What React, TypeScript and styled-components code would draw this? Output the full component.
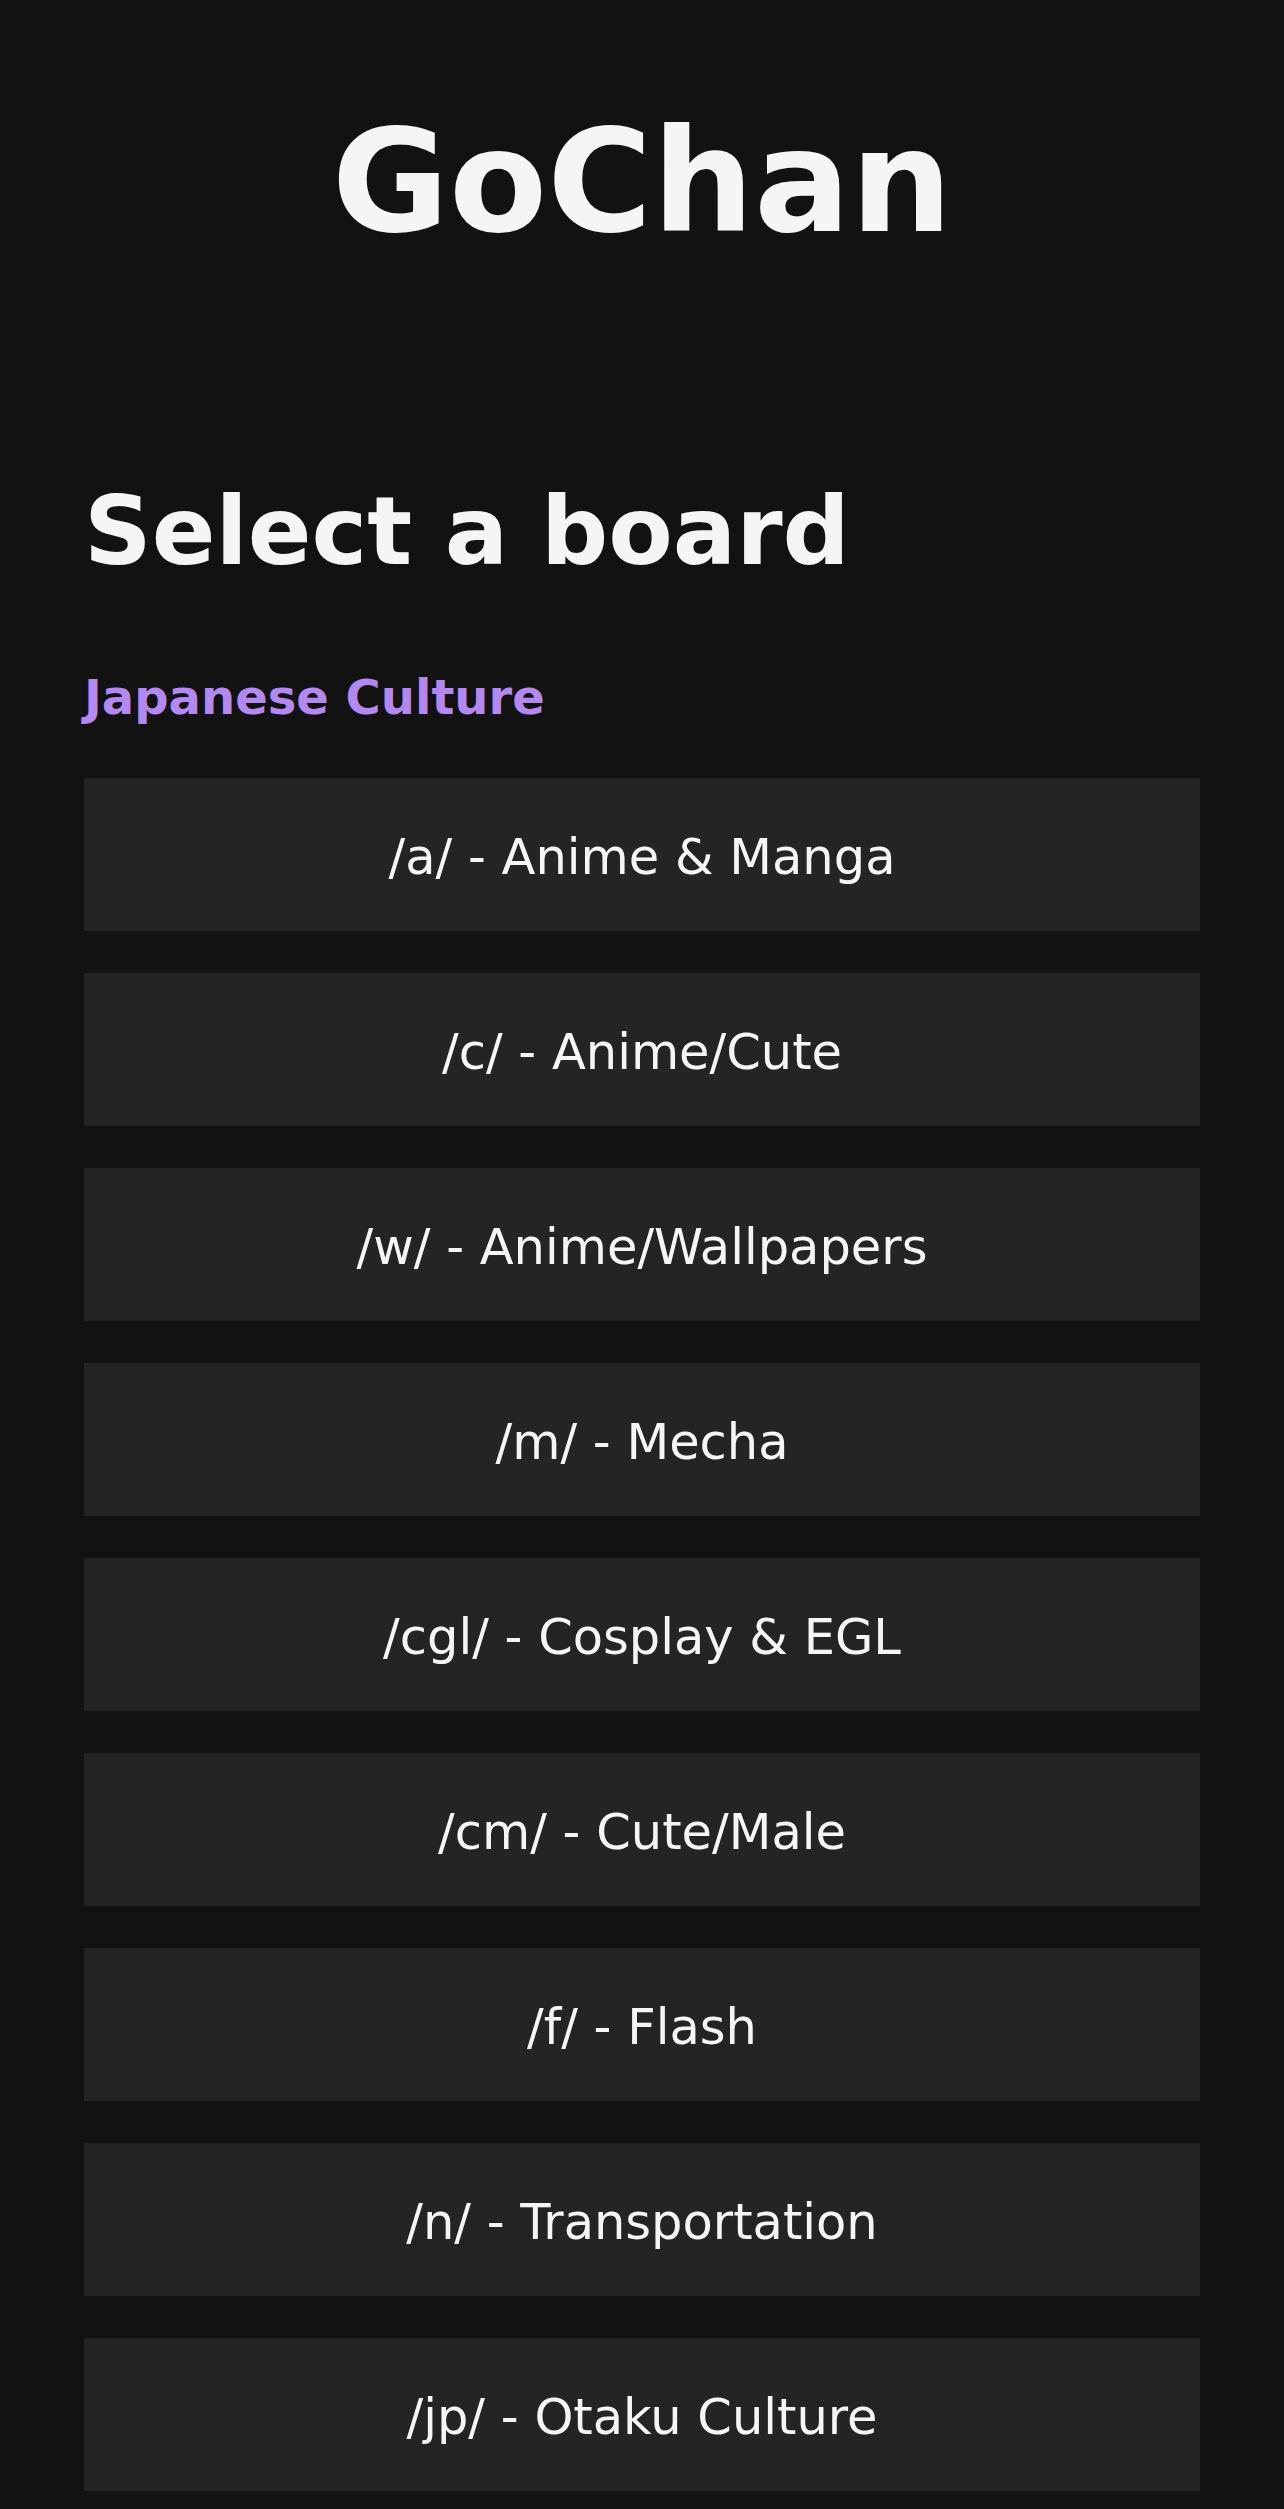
import styled, { createGlobalStyle } from "styled-components";

const GlobalStyle = createGlobalStyle`
  html, body {
    margin: 0;
    padding: 0;
    background-color: #121212;
  }
  body {
    font-family: "DejaVu Sans", Verdana, sans-serif;
    color: #f5f5f5;
  }
`;

interface Board {
  code: string;
  name: string;
}

const boards: Board[] = [
  { code: "a", name: "Anime & Manga" },
  { code: "c", name: "Anime/Cute" },
  { code: "w", name: "Anime/Wallpapers" },
  { code: "m", name: "Mecha" },
  { code: "cgl", name: "Cosplay & EGL" },
  { code: "cm", name: "Cute/Male" },
  { code: "f", name: "Flash" },
  { code: "n", name: "Transportation" },
  { code: "jp", name: "Otaku Culture" },
];

const App: React.FC = () => {
  return (
    <>
      <GlobalStyle />
      <Page>
        <Header>
          <Logo>GoChan</Logo>
        </Header>
        <Main>
          <Heading>Select a board</Heading>
          <Category>Japanese Culture</Category>
          <BoardList>
            {boards.map((b) => (
              <BoardLink key={b.code} href={`#/${b.code}/`}>
                /{b.code}/ - {b.name}
              </BoardLink>
            ))}
          </BoardList>
        </Main>
      </Page>
    </>
  );
};

export default App;

const Page = styled.div`
  min-height: 2509px;
  box-sizing: border-box;
  padding: 0 84px 19px;
  background-color: #121212;
`;

const Header = styled.header`
  padding-top: 98px;
  text-align: center;
`;

const Logo = styled.h1`
  margin: 0;
  font-size: 143px;
  font-weight: 700;
  line-height: normal;
  color: #f5f5f5;
`;

const Main = styled.main`
  display: flex;
  flex-direction: column;
`;

const Heading = styled.h2`
  margin: 212px 0 0;
  font-size: 94px;
  font-weight: 700;
  line-height: normal;
  color: #f5f5f5;
`;

const Category = styled.h3`
  margin: 83px 0 0;
  font-size: 48px;
  font-weight: 700;
  line-height: normal;
  color: #b388f0;
`;

const BoardList = styled.nav`
  display: flex;
  flex-direction: column;
  gap: 42px;
  margin-top: 53px;
`;

const BoardLink = styled.a`
  display: flex;
  align-items: center;
  justify-content: center;
  height: 153px;
  box-sizing: border-box;
  padding-top: 4px;
  background-color: #242424;
  color: #f5f5f5;
  font-size: 49.5px;
  text-decoration: none;
  &:hover {
    background-color: #2e2e2e;
  }
`;
